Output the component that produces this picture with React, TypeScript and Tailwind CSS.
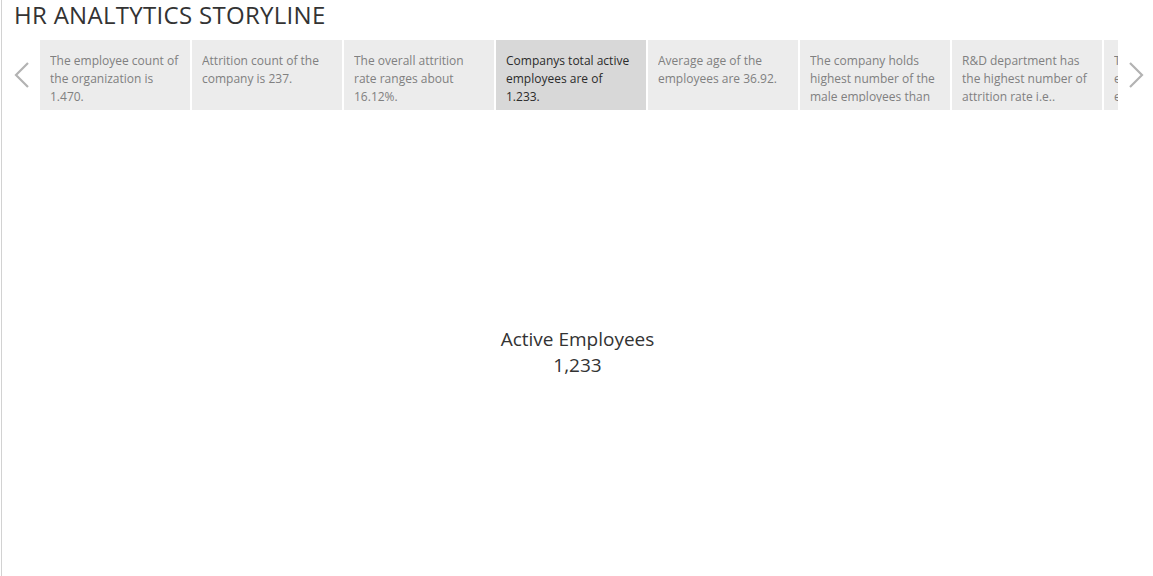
const points = [
  'The employee count of the organization is 1.470.',
  'Attrition count of the company is 237.',
  'The overall attrition rate ranges about 16.12%.',
  'Companys total active employees are of 1.233.',
  'Average age of the employees are 36.92.',
  'The company holds highest number of the male employees than female employees.',
  'R&D department has the highest number of attrition rate i.e..',
  'The attrition of employees in the education field is highest in life sciences.',
];

const Chevron = ({ dir }: { dir: 'left' | 'right' }) => (
  <svg width="18" height="28" viewBox="0 0 18 28" fill="none" stroke="#b3b3b3" strokeWidth={2.2}>
    {dir === 'left' ? <path d="M15 2 L3 14 L15 26" /> : <path d="M3 2 L15 14 L3 26" />}
  </svg>
);

export default function App() {
  return (
    <div className="w-[1153px] h-[576px] bg-white overflow-hidden font-['Open_Sans',sans-serif]">
      <div className="ml-px h-full border-l border-[#d2d2d2] flex flex-col">
        <h1 className="pl-3 h-[40px] text-[24px] leading-[30px] text-[#333] tracking-[0.3px]">
          HR ANALTYTICS STORYLINE
        </h1>
        <div className="flex items-center h-[70px]">
          <button className="w-[38px] flex justify-center pl-[2px]">
            <Chevron dir="left" />
          </button>
          <div className="w-[1078px] h-full overflow-hidden flex gap-[2px]">
            {points.map((p, i) => (
              <div
                key={i}
                className={`shrink-0 w-[150px] h-full overflow-hidden px-[10px] pt-[12px] text-[12px] leading-[18px] ${
                  i === 3 ? 'bg-[#d8d8d8] text-[#2b2b2b]' : 'bg-[#ececec] text-[#808080]'
                }`}
              >
                <div className="h-[50px] overflow-hidden">{p}</div>
              </div>
            ))}
          </div>
          <button className="flex-1 flex justify-center">
            <Chevron dir="right" />
          </button>
        </div>
        <div className="flex-1 flex flex-col items-center pt-[216px] text-[#333] text-[19px] leading-[26px]">
          <div>Active Employees</div>
          <div className="font-medium">1,233</div>
        </div>
      </div>
    </div>
  );
}
